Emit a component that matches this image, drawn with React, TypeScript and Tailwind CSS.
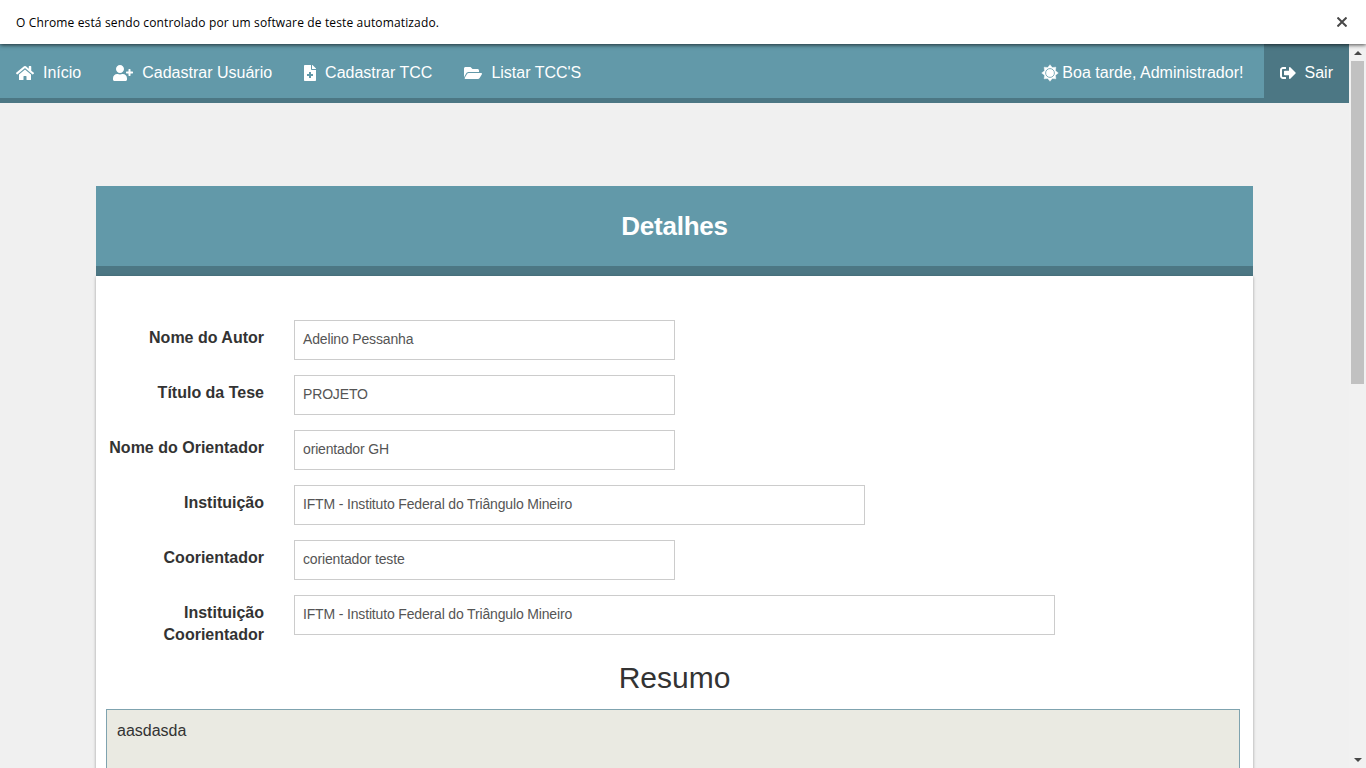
import type { ReactNode } from "react";
import { FaFileMedical, FaFolderOpen, FaHome, FaSignOutAlt, FaUserPlus } from "react-icons/fa";

const fields = [
  { label: "Nome do Autor", value: "Adelino Pessanha", width: "w-[381px]" },
  { label: "Título da Tese", value: "PROJETO", width: "w-[381px]" },
  { label: "Nome do Orientador", value: "orientador GH", width: "w-[381px]" },
  { label: "Instituição", value: "IFTM - Instituto Federal do Triângulo Mineiro", width: "w-[571px]" },
  { label: "Coorientador", value: "corientador teste", width: "w-[381px]" },
  { label: "Instituição Coorientador", value: "IFTM - Instituto Federal do Triângulo Mineiro", width: "w-[761px]" },
];

const sunRays = Array.from({ length: 16 }, (_, i) => {
  const radius = i % 2 === 0 ? 8.3 : 5.9;
  const angle = (i * Math.PI) / 8;
  return `${8 + radius * Math.sin(angle)},${8 - radius * Math.cos(angle)}`;
}).join(" ");

function SunIcon() {
  return (
    <svg className="size-4 overflow-visible" viewBox="0 0 16 16">
      <polygon points={sunRays} fill="currentColor" stroke="currentColor" strokeWidth="0.4" strokeLinejoin="round" />
      <circle cx="8" cy="8" r="4.4" fill="none" stroke="#6299a9" strokeWidth="0.8" />
    </svg>
  );
}

function NavItem({ icon, children }: { icon: ReactNode; children: ReactNode }) {
  return (
    <a className="flex items-center gap-[9px] px-4 whitespace-nowrap">
      {icon}
      <span>{children}</span>
    </a>
  );
}

function InfoBar() {
  return (
    <div className="relative z-10 flex h-11 shrink-0 items-center justify-between bg-white pr-[19px] pl-4 shadow-[0_1px_4px_rgba(0,0,0,0.7)]">
      <span className="pt-[2px] font-['Open_Sans','Noto_Sans',sans-serif] text-[12px] tracking-[0.14px] text-black">
        O Chrome está sendo controlado por um software de teste automatizado.
      </span>
      <svg className="size-[10px]" viewBox="0 0 10 10" fill="none" stroke="#484848" strokeWidth="2">
        <path d="M0.5 0.5L9.5 9.5M9.5 0.5L0.5 9.5" />
      </svg>
    </div>
  );
}

function Scrollbar() {
  return (
    <div className="flex w-[17px] shrink-0 flex-col items-center bg-[#f1f1f1]">
      <div className="flex h-[17px] items-center justify-center">
        <svg width="8" height="4" viewBox="0 0 8 4" fill="#484848"><path d="M0 4L4 0L8 4Z" /></svg>
      </div>
      <div className="mr-px h-[323px] w-[13px] bg-[#c1c1c1]" />
      <div className="mt-auto flex h-[17px] items-center justify-center">
        <svg width="8" height="4" viewBox="0 0 8 4" fill="#484848"><path d="M0 0L4 4L8 0Z" /></svg>
      </div>
    </div>
  );
}

export default function App() {
  return (
    <div className="flex h-[768px] w-[1366px] flex-col overflow-hidden bg-[#f0f0f0] font-['Liberation_Sans',Arial,sans-serif] text-[16px] text-[#333]">
      <InfoBar />
      <div className="flex min-h-0 flex-1">
        <main className="min-w-0 flex-1 overflow-hidden">
          <nav className="flex h-[59px] justify-between border-b-[5px] border-[#4c7784] bg-[#6299a9] text-white">
            <div className="flex pt-1">
              <NavItem icon={<FaHome className="h-4 w-[18px]" />}>Início</NavItem>
              <NavItem icon={<FaUserPlus className="h-4 w-5" />}>Cadastrar Usuário</NavItem>
              <NavItem icon={<FaFileMedical className="h-4 w-3" />}>Cadastrar TCC</NavItem>
              <NavItem icon={<FaFolderOpen className="h-4 w-[18px]" />}>Listar TCC'S</NavItem>
            </div>
            <div className="flex">
              <div className="flex items-center gap-1 pt-1 pr-5">
                <SunIcon />
                <span className="tracking-[0.03px]">Boa tarde, Administrador!</span>
              </div>
              <div className="flex bg-[#4c7784] pt-1">
                <NavItem icon={<FaSignOutAlt className="size-4" />}>Sair</NavItem>
              </div>
            </div>
          </nav>
          <section className="mx-24 mt-[83px] h-[720px]">
            <header className="flex h-[90px] items-center justify-center border-b-[10px] border-[#4c7784] bg-[#6299a9]">
              <h1 className="text-[26px] font-bold tracking-[-0.25px] text-white">Detalhes</h1>
            </header>
            <div className="h-full bg-white px-[10px] pt-11 shadow-[0_1px_3px_rgba(0,0,0,0.35)]">
              <div className="flex flex-col gap-[15px]">
                {fields.map((field) => (
                  <div key={field.label} className="flex h-10 gap-[30px]">
                    <label className="w-[158px] shrink-0 pt-[7px] text-right leading-[22px] font-bold">{field.label}</label>
                    <div className={`${field.width} flex items-center border border-[#ccc] px-2 pb-[2px] text-[14px] tracking-[-0.16px] text-[#555]`}>
                      {field.value}
                    </div>
                  </div>
                ))}
              </div>
              <h2 className="mt-[25px] text-center text-[30px] leading-[36px]">Resumo</h2>
              <div className="mt-[13px] mr-[3px] h-[200px] border border-[#7fa3af] bg-[#eaeae2] px-[10px] pt-[10px] leading-[22px]">
                aasdasda
              </div>
            </div>
          </section>
        </main>
        <Scrollbar />
      </div>
    </div>
  );
}
